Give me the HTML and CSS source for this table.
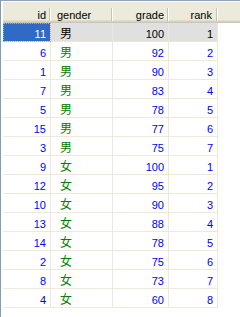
FILE: index.html
```html
<!DOCTYPE html>
<html>
<head>
<meta charset="utf-8">
<link rel="stylesheet" href="styles.css">
</head>
<body>
<div class="grid">
  <div class="head">
    <div class="h c-id">id</div>
    <div class="h c-gender">gender</div>
    <div class="h c-grade">grade</div>
    <div class="h c-rank">rank</div>
  </div>
  <div class="row sel">
    <div class="c c-id num focus">11</div>
    <div class="c c-gender txt">男</div>
    <div class="c c-grade num">100</div>
    <div class="c c-rank num">1</div>
  </div>
  <div class="row"><div class="c c-id num">6</div><div class="c c-gender txt">男</div><div class="c c-grade num">92</div><div class="c c-rank num">2</div></div>
  <div class="row"><div class="c c-id num">1</div><div class="c c-gender txt">男</div><div class="c c-grade num">90</div><div class="c c-rank num">3</div></div>
  <div class="row"><div class="c c-id num">7</div><div class="c c-gender txt">男</div><div class="c c-grade num">83</div><div class="c c-rank num">4</div></div>
  <div class="row"><div class="c c-id num">5</div><div class="c c-gender txt">男</div><div class="c c-grade num">78</div><div class="c c-rank num">5</div></div>
  <div class="row"><div class="c c-id num">15</div><div class="c c-gender txt">男</div><div class="c c-grade num">77</div><div class="c c-rank num">6</div></div>
  <div class="row"><div class="c c-id num">3</div><div class="c c-gender txt">男</div><div class="c c-grade num">75</div><div class="c c-rank num">7</div></div>
  <div class="row"><div class="c c-id num">9</div><div class="c c-gender txt">女</div><div class="c c-grade num">100</div><div class="c c-rank num">1</div></div>
  <div class="row"><div class="c c-id num">12</div><div class="c c-gender txt">女</div><div class="c c-grade num">95</div><div class="c c-rank num">2</div></div>
  <div class="row"><div class="c c-id num">10</div><div class="c c-gender txt">女</div><div class="c c-grade num">90</div><div class="c c-rank num">3</div></div>
  <div class="row"><div class="c c-id num">13</div><div class="c c-gender txt">女</div><div class="c c-grade num">88</div><div class="c c-rank num">4</div></div>
  <div class="row"><div class="c c-id num">14</div><div class="c c-gender txt">女</div><div class="c c-grade num">78</div><div class="c c-rank num">5</div></div>
  <div class="row"><div class="c c-id num">2</div><div class="c c-gender txt">女</div><div class="c c-grade num">75</div><div class="c c-rank num">6</div></div>
  <div class="row"><div class="c c-id num">8</div><div class="c c-gender txt">女</div><div class="c c-grade num">73</div><div class="c c-rank num">7</div></div>
  <div class="row"><div class="c c-id num">4</div><div class="c c-gender txt">女</div><div class="c c-grade num">60</div><div class="c c-rank num">8</div></div>
</div>
</body>
</html>
```

FILE: styles.css
```css
html, body {
  margin: 0;
  padding: 0;
  background: #fff;
}
body {
  width: 240px;
  height: 317px;
  overflow: hidden;
  font-family: "Liberation Sans", Arial, "Noto Sans CJK SC", sans-serif;
  font-size: 11px;
}
.grid {
  box-sizing: border-box;
  width: 240px;
  height: 317px;
  border-top: 1px solid #8da2bd;
  border-left: 1px solid #7f9db9;
  padding: 1px 0 0 2px;
}
.head {
  display: flex;
  height: 21px;
  background: linear-gradient(to bottom, #ebeadb 0, #ebeadb 18px, #e2decd 18px, #e2decd 19px, #d6d2c2 19px, #d6d2c2 20px, #cbc7b8 20px, #cbc7b8 21px);
}
.h {
  box-sizing: border-box;
  height: 21px;
  padding-top: 6px;
  line-height: 14px;
  color: #000;
  background:
    linear-gradient(#c5c2b2, #c5c2b2) right 1px top 6px / 1px 13px no-repeat,
    linear-gradient(#ffffff, #ffffff) right 0 top 6px / 1px 13px no-repeat;
}
.c-id { width: 48px; }
.c-gender { width: 62px; }
.c-grade { width: 56px; }
.c-rank { width: 49px; }
.h.c-id, .h.c-grade, .h.c-rank { text-align: right; padding-right: 5px; }
.h.c-rank { padding-right: 6px; }
.h.c-gender { text-align: left; padding-left: 6px; }

.row {
  display: flex;
  height: 19px;
}
.c {
  box-sizing: border-box;
  height: 19px;
  border-right: 1px solid #ece9d8;
  border-bottom: 1px solid #ece9d8;
  padding-top: 4px;
  line-height: 14px;
  white-space: nowrap;
}
.num {
  text-align: right;
  padding-right: 4px;
  color: #0000ff;
}
.txt {
  padding-left: 9px;
  padding-top: 3px;
  color: #008000;
  font-family: "Noto Sans CJK SC", sans-serif;
  font-size: 12px;
}
.sel .c {
  background: #e0e0e0;
  color: #000;
}
.sel .focus {
  background: #316ac5;
  color: #fff;
  outline: 1px dotted #f0a040;
  outline-offset: -1px;
}
```
